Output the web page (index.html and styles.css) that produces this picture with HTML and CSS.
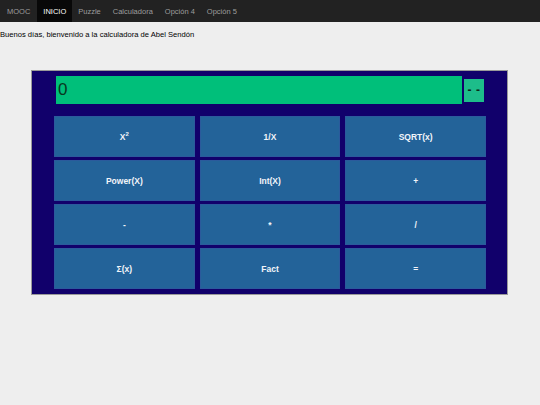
FILE: index.html
```html
<!DOCTYPE html>
<html lang="es">
<head>
<meta charset="utf-8">
<title>Calculadora</title>
<link rel="stylesheet" href="styles.css">
</head>
<body>
<nav class="navbar">
  <span class="brand">MOOC</span>
  <span class="nav-item active">INICIO</span>
  <span class="nav-item">Puzzle</span>
  <span class="nav-item">Calculadora</span>
  <span class="nav-item">Opción 4</span>
  <span class="nav-item">Opción 5</span>
</nav>
<p class="greeting">Buenos días, bienvenido a la calculadora de Abel Sendón</p>
<div class="calc">
  <div class="display-row">
    <div class="display">0</div>
    <div class="status">- -</div>
  </div>
  <div class="keys">
    <button class="key">X<sup>2</sup></button>
    <button class="key">1/X</button>
    <button class="key">SQRT(x)</button>
    <button class="key">Power(X)</button>
    <button class="key">Int(X)</button>
    <button class="key">+</button>
    <button class="key">-</button>
    <button class="key">*</button>
    <button class="key">/</button>
    <button class="key">Σ(x)</button>
    <button class="key">Fact</button>
    <button class="key">=</button>
  </div>
</div>
</body>
</html>
```
FILE: styles.css
```css
html, body {
  margin: 0;
  padding: 0;
  background: #eeeeee;
  font-family: "Liberation Sans", Arial, sans-serif;
}
.navbar {
  display: flex;
  align-items: stretch;
  height: 22px;
  background: #222222;
  font-size: 7.5px;
}
.brand {
  display: flex;
  align-items: center;
  padding: 0 7px 0 7px;
  color: #9d9d9d;
}
.nav-item {
  display: flex;
  align-items: center;
  padding: 0 6px;
  color: #9d9d9d;
}
.nav-item.active {
  background: #080808;
  color: #ffffff;
}
.greeting {
  margin: 8px 0 0 0;
  font-size: 7.6px;
  line-height: 9px;
  color: #000000;
}
.calc {
  margin: 31px 0 0 31px;
  width: 432px;
  padding: 5px 21px 5px 22px;
  background: #11006b;
  border: 1px solid #9a9a9a;
}
.display-row {
  display: flex;
  align-items: flex-start;
  gap: 2px;
  margin-left: 2px;
}
.display {
  width: 404px;
  height: 28px;
  background: #00bf7a;
  color: #083820;
  font-size: 17px;
  line-height: 28px;
  padding-left: 2px;
}
.status {
  margin-top: 3px;
  width: 20px;
  height: 23px;
  background: #1dbd8a;
  color: #0b2a1a;
  font-size: 12px;
  font-weight: bold;
  line-height: 22px;
  text-align: center;
  letter-spacing: 0.5px;
  white-space: pre;
}
.keys {
  margin-top: 12px;
  display: grid;
  grid-template-columns: repeat(3, 1fr);
  grid-auto-rows: 41px;
  column-gap: 5px;
  row-gap: 3px;
}
.key {
  margin: 0;
  padding: 0;
  background: #236399;
  border: 1px solid #2b5a9c;
  color: #f2f5fa;
  font-family: "Liberation Sans", Arial, sans-serif;
  font-size: 8.5px;
  font-weight: bold;
}
.key sup {
  font-size: 6px;
  line-height: 0;
}
```
